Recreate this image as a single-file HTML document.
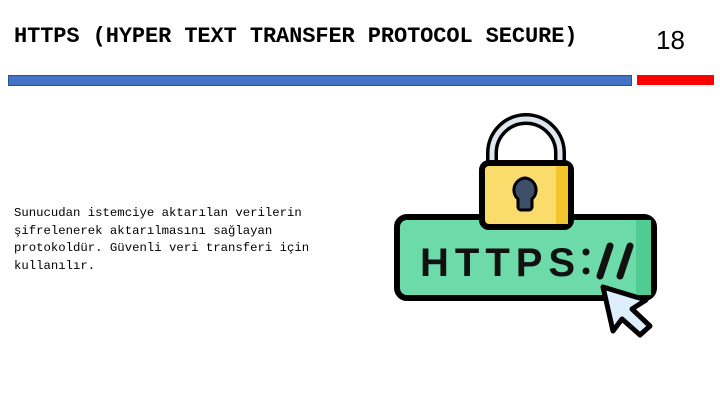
<!DOCTYPE html>
<html><head><meta charset="utf-8"><style>
html,body{margin:0;padding:0;width:720px;height:405px;background:#fff;overflow:hidden;position:relative}
.t{position:absolute;left:14px;top:24px;font:bold 22px "Liberation Mono",monospace;color:#000;white-space:nowrap;letter-spacing:-0.1px}
.n{position:absolute;left:656px;top:25px;font:26px "Liberation Sans",sans-serif;color:#000}
.b{position:absolute;left:8px;top:75px;width:622px;height:9px;background:#4472c4;border:1px solid #2f528f}
.r{position:absolute;left:637px;top:75px;width:77px;height:10px;background:#f00}
.p{position:absolute;left:14px;top:205px;font:12.3px/17.5px "Liberation Mono",monospace;color:#000;white-space:pre}
svg{position:absolute;left:0;top:0}
</style></head><body>
<div class="t">HTTPS (HYPER TEXT TRANSFER PROTOCOL SECURE)</div>
<div class="n">18</div>
<div class="b"></div><div class="r"></div>
<div class="p">Sunucudan istemciye aktarılan verilerin
şifrelenerek aktarılmasını sağlayan
protokoldür. Güvenli veri transferi için
kullanılır.</div>
<svg width="720" height="405">
<rect x="397" y="217" width="257" height="81" rx="10" fill="#6cdba9" stroke="#000" stroke-width="6"/>
<rect x="636" y="220" width="15" height="75" fill="#4fcc92"/>
<path d="M492 165 V153 a34 34 0 0 1 68 0 V165" fill="none" stroke="#000" stroke-width="12"/>
<path d="M492 165 V153 a34 34 0 0 1 68 0 V165" fill="none" stroke="#dfe6ef" stroke-width="5"/>
<rect x="482" y="163" width="89" height="64" rx="7" fill="#f9dc6c" stroke="#000" stroke-width="6"/>
<rect x="556" y="166" width="12" height="58" fill="#f2c52d"/>
<path d="M525 178 a12 12 0 0 1 7 21 v8 a3 3 0 0 1 -3 3 h-8 a3 3 0 0 1 -3 -3 v-8 a12 12 0 0 1 7 -21z" fill="#3d5068" stroke="#000" stroke-width="3"/>
<text x="420" y="276" font-family="Liberation Sans,sans-serif" font-weight="bold" font-size="40" letter-spacing="6" fill="#111">HTTPS</text>
<circle cx="586" cy="252" r="3.5" fill="#111"/><circle cx="586" cy="271" r="3.5" fill="#111"/>
<path d="M610 246 L600 276 M630 246 L620 276" stroke="#111" stroke-width="7" stroke-linecap="round"/>
<path d="M603 287 L646 300 L632 309 L650 326 L640 335 L622 319 L613 331Z" fill="#ddeefc" stroke="#000" stroke-width="5" stroke-linejoin="round"/>
</svg>
</body></html>
